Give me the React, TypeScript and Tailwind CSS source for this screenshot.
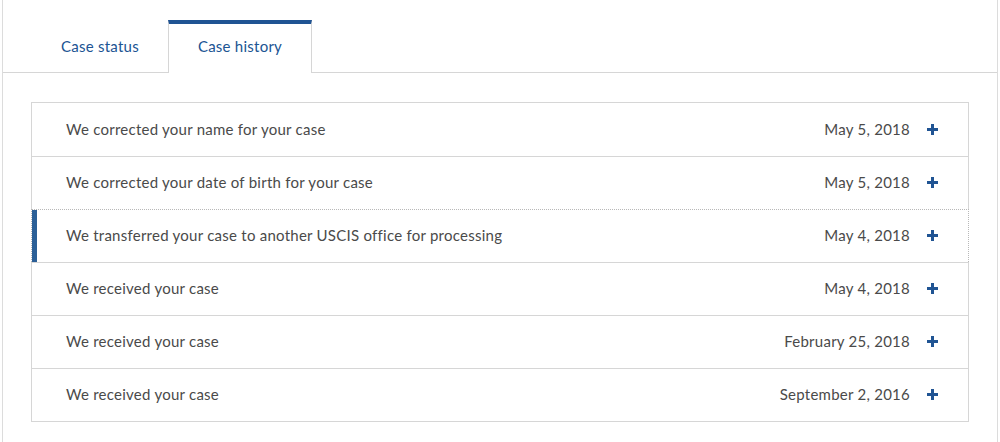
import React from "react"

type HistoryItem = {
  title: string
  date: string
  active?: boolean
}

const items: HistoryItem[] = [
  { title: "We corrected your name for your case", date: "May 5, 2018" },
  { title: "We corrected your date of birth for your case", date: "May 5, 2018" },
  {
    title: "We transferred your case to another USCIS office for processing",
    date: "May 4, 2018",
    active: true,
  },
  { title: "We received your case", date: "May 4, 2018" },
  { title: "We received your case", date: "February 25, 2018" },
  { title: "We received your case", date: "September 2, 2016" },
]

function PlusIcon() {
  return (
    <svg width="11" height="11" viewBox="0 0 11 11" className="shrink-0">
      <rect x="0" y="4" width="11" height="3" fill="#205493" />
      <rect x="4" y="0" width="3" height="11" fill="#205493" />
    </svg>
  )
}

export default function App() {
  return (
    <div className="h-[442px] w-full bg-white font-['Lato','Liberation_Sans',sans-serif] tracking-[0.25px] overflow-hidden">
      <div className="mx-[2px] h-full border-x border-[#dcdcdc] flex flex-col">
        {/* tabs */}
        <div className="flex pt-[20px] pl-[29px] border-b border-[#d6d6d6]">
          <button className="w-[136px] h-[52px] flex items-center justify-center text-[15px] text-[#205493] tracking-[0.25px]">
            Case status
          </button>
          <button className="w-[144px] h-[53px] -mb-px pb-[4px] flex items-center justify-center bg-white border-x border-[#d6d6d6] border-t-4 border-t-[#205493] text-[15px] text-[#205493] tracking-[0.25px]">
            Case history
          </button>
        </div>

        {/* history list */}
        <div className="pt-[29px] px-[28px]">
          <div className="border border-[#d6d6d6] bg-white">
            {items.map((item, i) => (
              <div
                key={i}
                className={
                  item.active
                    ? "relative -mx-px flex h-[53px] items-stretch border border-b-0 border-dotted border-[#b8b8b8] bg-white"
                    : i === 0
                      ? "flex h-[53px] items-stretch"
                      : "flex h-[53px] items-stretch border-t border-[#d6d6d6]"
                }
              >
                {item.active ? <div className="w-[5px] bg-[#2b5f97] shrink-0" /> : null}
                <div
                  className={
                    item.active
                      ? "flex flex-1 items-center justify-between pl-[29px] pr-[30px] pb-px"
                      : "flex flex-1 items-center justify-between pl-[34px] pr-[30px] pb-px"
                  }
                >
                  <span className="text-[15px] text-[#4a4a4a]">{item.title}</span>
                  <span className="flex items-center gap-[17px]">
                    <span className="text-[15px] text-[#4a4a4a]">{item.date}</span>
                    <PlusIcon />
                  </span>
                </div>
              </div>
            ))}
          </div>
        </div>
      </div>
    </div>
  )
}
